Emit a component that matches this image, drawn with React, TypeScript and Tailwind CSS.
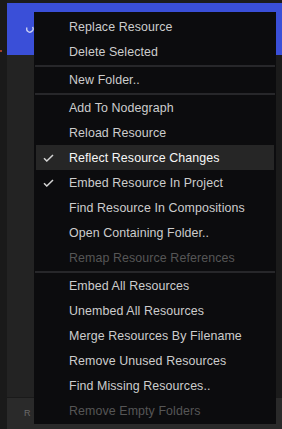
type Item =
  | { kind: "sep" }
  | { kind: "item"; label: string; checked?: boolean; active?: boolean; disabled?: boolean };

const items: Item[] = [
  { kind: "item", label: "Replace Resource" },
  { kind: "item", label: "Delete Selected" },
  { kind: "sep" },
  { kind: "item", label: "New Folder.." },
  { kind: "sep" },
  { kind: "item", label: "Add To Nodegraph" },
  { kind: "item", label: "Reload Resource" },
  { kind: "item", label: "Reflect Resource Changes", checked: true, active: true },
  { kind: "item", label: "Embed Resource In Project", checked: true },
  { kind: "item", label: "Find Resource In Compositions" },
  { kind: "item", label: "Open Containing Folder.." },
  { kind: "item", label: "Remap Resource References", disabled: true },
  { kind: "sep" },
  { kind: "item", label: "Embed All Resources" },
  { kind: "item", label: "Unembed All Resources" },
  { kind: "item", label: "Merge Resources By Filename" },
  { kind: "item", label: "Remove Unused Resources" },
  { kind: "item", label: "Find Missing Resources.." },
  { kind: "item", label: "Remove Empty Folders", disabled: true },
];

function Check() {
  return (
    <svg width="11" height="8" viewBox="0 0 11 8" fill="none">
      <path d="M1 4.2 L3.8 7 L10 1" stroke="#d4d4d4" strokeWidth="1.5" />
    </svg>
  );
}

function ContextMenu() {
  return (
    <div className="absolute left-[34px] top-[12px] w-[242px] bg-[#0c0c0e] px-[2px] pt-[2px] pb-[1px]">
      {items.map((it, i) =>
        it.kind === "sep" ? (
          <div key={i} className="h-[3px] -mx-[1px] flex items-center">
            <div className="h-[2px] w-full bg-[#27272a]" />
          </div>
        ) : (
          <div
            key={i}
            className={`h-[25px] flex items-center ${it.active ? "bg-[#262626]" : ""}`}
          >
            <div className="w-[33px] pl-[7px] flex items-center">{it.checked && <Check />}</div>
            <span
              className={`mt-[2px] text-[12.4px] tracking-[0.1px] ${
                it.disabled ? "text-[#565656]" : it.active ? "text-[#f6f6f6]" : "text-[#cdcdcd]"
              }`}
            >
              {it.label}
            </span>
          </div>
        )
      )}
    </div>
  );
}

export default function App() {
  return (
    <div
      className="relative w-[282px] h-[429px] overflow-hidden bg-[#1c1c1c] flex"
      style={{ fontFamily: '"Liberation Sans", Arial, sans-serif' }}
    >
      <div className="w-[7px] bg-[#1a1a1a] flex flex-col">
        <div className="h-[50px]" />
        <div className="w-[2px] h-[2px] bg-[#a0402a]" />
      </div>

      <div className="flex-1 flex flex-col">
        <div className="h-[3px] bg-[#1c1c1c]" />
        <div className="h-[52px] flex">
          <div className="w-[27px] bg-[#3a4fd8] flex items-center justify-end">
            <svg width="8" height="9" viewBox="0 0 8 9" fill="none" className="mt-[-2px]">
              <path d="M1 3.5 A3.2 3.2 0 1 0 6.5 3" stroke="#c9cff2" strokeWidth="1.4" />
            </svg>
          </div>
          <div className="flex-1 bg-[#3a4fd8]" />
        </div>
        <div className="flex-1 flex">
          <div className="w-[27px] bg-[#232323]" />
          <div className="flex-1 bg-[#1b1b1b]" />
        </div>
        <div className="h-[1px] bg-[#1a1a1a]" />
        <div className="h-[31px] bg-[#2a2a2a] flex items-center pl-[17px]">
          <span className="text-[9px] text-[#6a6a6a]">R</span>
        </div>
      </div>

      <ContextMenu />
    </div>
  );
}
